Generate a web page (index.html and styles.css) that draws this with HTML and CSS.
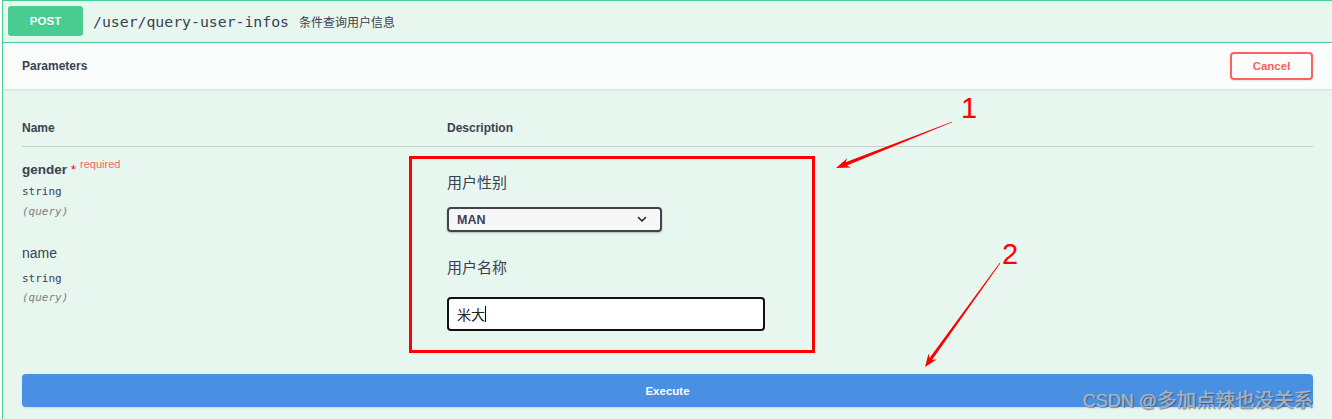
FILE: index.html
```html
<!DOCTYPE html>
<html lang="zh">
<head>
<meta charset="utf-8">
<title>POST /user/query-user-infos</title>
<link rel="stylesheet" href="styles.css">
</head>
<body>
<div class="opblock">
  <div class="summary">
    <span class="method">POST</span>
    <span class="path">/user/query-user-infos</span>
    <span class="summary-desc">条件查询用户信息</span>
  </div>
  <div class="section-header">
    <h4 class="section-title">Parameters</h4>
    <button class="btn-cancel">Cancel</button>
  </div>
  <div class="params">
    <div class="params-head">
      <div class="col-name">Name</div>
      <div class="col-desc">Description</div>
    </div>
    <div class="param-row row-gender">
      <div class="col-name">
        <div class="param-name required">gender<span class="star">&nbsp;*</span><span class="req-label">required</span></div>
        <div class="param-type">string</div>
        <div class="param-in">(query)</div>
      </div>
      <div class="col-desc">
        <p class="param-desc">用户性别</p>
        <div class="select">
          <span class="select-value">MAN</span>
          <svg class="chevron" width="10" height="7" viewBox="0 0 10 7"><path d="M1.5 1.5 L5 5 L8.5 1.5" fill="none" stroke="#222" stroke-width="1.6" stroke-linecap="round" stroke-linejoin="round"/></svg>
        </div>
      </div>
    </div>
    <div class="param-row row-name">
      <div class="col-name">
        <div class="param-name">name</div>
        <div class="param-type">string</div>
        <div class="param-in">(query)</div>
      </div>
      <div class="col-desc">
        <p class="param-desc">用户名称</p>
        <div class="text-input"><span class="input-value">米大</span><span class="caret"></span></div>
      </div>
    </div>
  </div>
  <div class="execute-wrap">
    <button class="btn-execute">Execute</button>
  </div>
</div>

<div class="annot-box"></div>
<svg class="annot-arrows" width="1332" height="419" viewBox="0 0 1332 419">
  <polygon fill="#ff0000" points="952.15,122.37 846.86,165.62 850.84,167.49 836,168 847.16,158.19 845.54,162.28 951.85,121.63"/>
  <polygon fill="#ff0000" points="1000.32,263.23 932.15,359.83 936.66,359.39 925,367 928.55,353.54 929.55,357.95 999.68,262.77"/>
</svg>
<div class="annot-num num-1">1</div>
<div class="annot-num num-2">2</div>
<div class="watermark"><span class="wm-latin">CSDN @</span><span class="wm-cjk">多加点辣也没关系</span></div>
</body>
</html>
```

FILE: styles.css
```css
html, body {
  margin: 0;
  padding: 0;
}

body {
  position: relative;
  width: 1332px;
  height: 419px;
  overflow: hidden;
  background: #ffffff;
  color: #3b4151;
  font-family: "Liberation Sans", "Noto Sans CJK SC", sans-serif;
}

.opblock {
  margin-left: 2px;
  width: 1331px;
  height: 420px;
  box-sizing: border-box;
  border: 1px solid #49cc90;
  background: #e7f6ef;
  overflow: hidden;
}

/* summary */
.summary {
  display: flex;
  align-items: center;
  padding: 5px 5px 6px;
  border-bottom: 1px solid #49cc90;
}

.method {
  display: flex;
  align-items: center;
  justify-content: center;
  width: 75px;
  height: 30px;
  border-radius: 3px;
  background: #49cc90;
  color: #ffffff;
  font-weight: bold;
  font-size: 11.5px;
  text-shadow: 0 1px 0 rgba(0, 0, 0, 0.1);
}

.path {
  margin-left: 10px;
  font-family: "DejaVu Sans Mono", "Liberation Mono", monospace;
  font-size: 14.8px;
  color: #3b4151;
}

.summary-desc {
  margin-left: 10px;
  font-family: "Noto Sans CJK SC", sans-serif;
  font-size: 12px;
  color: #3b4151;
}

/* section header */
.section-header {
  display: flex;
  align-items: center;
  justify-content: space-between;
  padding: 9px 19px;
  background: rgba(255, 255, 255, 0.8);
  box-shadow: 0 1px 2px rgba(0, 0, 0, 0.1);
}

.section-title {
  margin: 0;
  font-size: 12px;
  font-weight: bold;
  color: #3b4151;
}

.btn-cancel {
  width: 83px;
  height: 28px;
  box-sizing: border-box;
  border: 2px solid #ff6060;
  border-radius: 4px;
  background: transparent;
  color: #ff6060;
  font-family: "Liberation Sans", sans-serif;
  font-size: 11.5px;
  font-weight: bold;
  box-shadow: 0 1px 2px rgba(0, 0, 0, 0.1);
  padding: 0;
}

/* parameters table */
.params {
  padding: 0 19px;
}

.params-head {
  display: flex;
  padding: 31px 0 10px;
  border-bottom: 1px solid rgba(59, 65, 81, 0.2);
  font-size: 12px;
  font-weight: bold;
  line-height: 16px;
}

.col-name {
  width: 425px;
  flex: none;
}

.col-desc {
  flex: 1;
}

.param-row {
  display: flex;
}

.row-gender {
  padding-top: 13px;
}

.row-name {
  padding-top: 11px;
}

.param-name {
  font-size: 13.5px;
  line-height: 20px;
  font-weight: bold;
  white-space: nowrap;
}

.row-name .param-name {
  font-size: 14px;
  font-weight: normal;
}

.star {
  color: #ff0000;
  font-weight: normal;
}

.req-label {
  position: relative;
  top: -6px;
  padding-left: 4px;
  font-size: 11px;
  font-weight: normal;
  color: #f26868;
}

.param-type {
  margin-top: 4px;
  font-family: "DejaVu Sans Mono", monospace;
  font-size: 11px;
  line-height: 16px;
  color: #3b4151;
}

.row-name .param-type {
  margin-top: 8px;
}

.param-in {
  margin-top: 4px;
  font-family: "DejaVu Sans Mono", monospace;
  font-size: 11px;
  line-height: 16px;
  font-style: italic;
  color: #808080;
}

.row-name .param-in {
  margin-top: 3px;
}

.param-desc {
  margin: 0;
  font-family: "Noto Sans CJK SC", sans-serif;
  font-size: 15px;
  line-height: 20px;
  color: #3b4151;
}

.row-gender .param-desc {
  margin-top: 12px;
}

.row-name .param-desc {
  margin-top: 14px;
}

.select {
  display: flex;
  align-items: center;
  justify-content: space-between;
  width: 215px;
  height: 25px;
  margin-top: 15px;
  box-sizing: border-box;
  padding: 0 13px 0 8px;
  border: 2px solid #41444e;
  border-radius: 4px;
  background: #f7f7f7;
  box-shadow: 0 1px 2px 0 rgba(0, 0, 0, 0.25);
}

.select-value {
  font-size: 12.5px;
  font-weight: bold;
  color: #3b4151;
}

.chevron {
  display: block;
}

.text-input {
  display: flex;
  align-items: center;
  width: 318px;
  height: 34px;
  margin-top: 20px;
  box-sizing: border-box;
  padding: 0 8px;
  border: 2px solid #111111;
  border-radius: 4px;
  background: #ffffff;
}

.input-value {
  font-family: "Noto Sans CJK SC", sans-serif;
  font-size: 14px;
  color: #222222;
}

.caret {
  width: 1px;
  height: 16px;
  background: #000000;
}

/* execute */
.execute-wrap {
  padding: 43px 19px 0;
}

.btn-execute {
  display: block;
  width: 100%;
  height: 33px;
  border: none;
  border-radius: 4px;
  background: #4990e2;
  color: #ffffff;
  font-family: "Liberation Sans", sans-serif;
  font-size: 11.5px;
  font-weight: bold;
  box-shadow: 0 1px 2px rgba(0, 0, 0, 0.1);
  padding: 0;
}

/* annotations (overlay) */
.annot-box {
  position: absolute;
  left: 409px;
  top: 156px;
  width: 406px;
  height: 197px;
  box-sizing: border-box;
  border: 3px solid #ff0000;
}

.annot-arrows {
  position: absolute;
  left: 0;
  top: 0;
  pointer-events: none;
}

.annot-num {
  position: absolute;
  font-size: 29px;
  line-height: 29px;
  color: #ff0000;
}

.num-1 {
  left: 961px;
  top: 94px;
}

.num-2 {
  left: 1002px;
  top: 240px;
}

.watermark {
  position: absolute;
  left: 1083px;
  top: 386px;
  white-space: nowrap;
  color: #a9b1bb;
  text-shadow: 1px 1px 1px rgba(50, 50, 50, 0.55), -0.5px -0.5px 0 rgba(255, 255, 255, 0.5);
  line-height: 26px;
}

.wm-latin {
  font-size: 18px;
}

.wm-cjk {
  font-family: "Noto Sans CJK SC", sans-serif;
  font-size: 19.5px;
}
```
